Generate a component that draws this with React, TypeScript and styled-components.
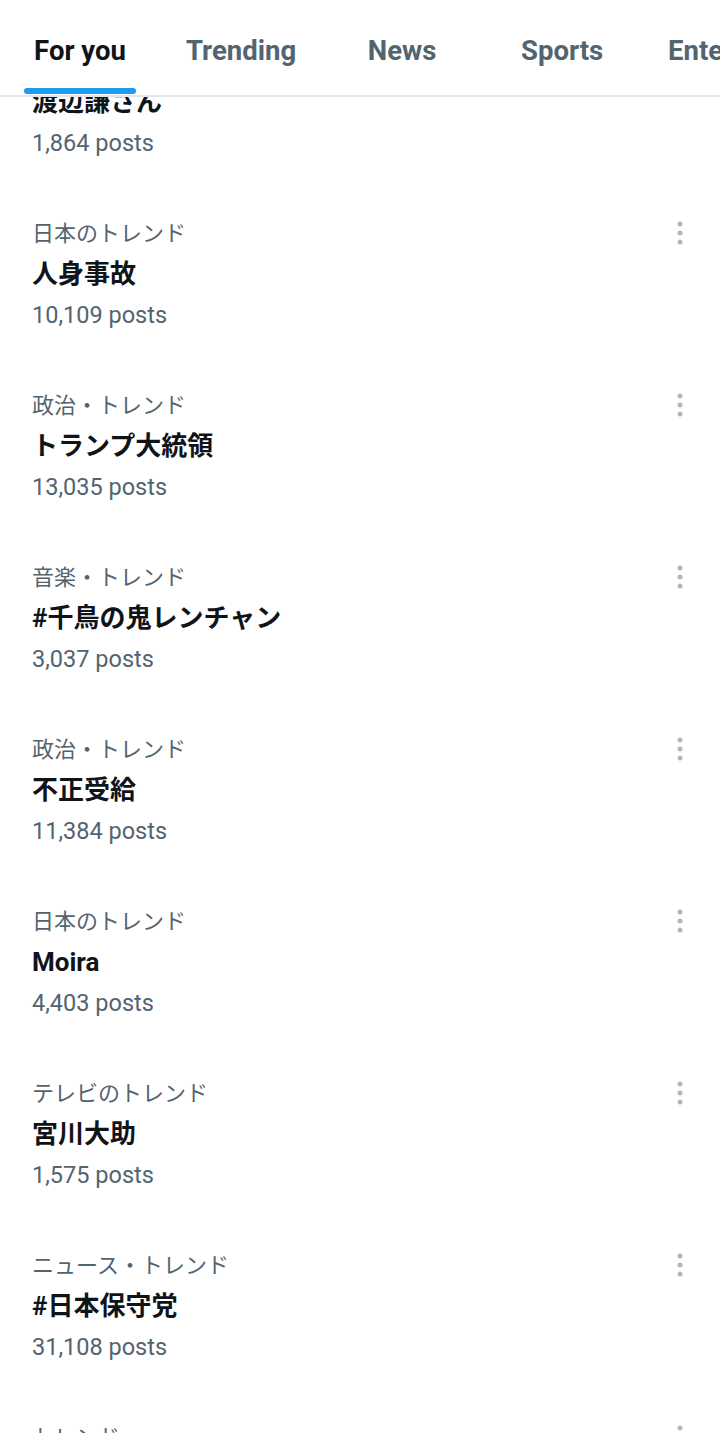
import React from "react";
import styled, { createGlobalStyle } from "styled-components";

const Global = createGlobalStyle`
  html, body { margin: 0; padding: 0; background: #fff; }
  body { font-family: Roboto, "Noto Sans CJK JP", sans-serif; -webkit-font-smoothing: antialiased; }
  * { box-sizing: border-box; }
`;

const Page = styled.div`
  width: 720px;
  height: 1433px;
  overflow: hidden;
  display: flex;
  flex-direction: column;
  background: #fff;
`;

const TabBar = styled.nav`
  flex: none;
  height: 97px;
  display: flex;
  border-bottom: 2px solid #e3e5e8;
  overflow: hidden;
  background: #fff;
  position: relative;
  z-index: 1;
`;

const Tab = styled.div<{ $active?: boolean }>`
  flex: none;
  min-width: 160px;
  padding: 35px 26px 0;
  display: flex;
  justify-content: center;
  position: relative;
  font-size: 27.5px;
  font-weight: 700;
  line-height: 32px;
  color: ${(p) => (p.$active ? "#0f1419" : "#536471")};
  white-space: nowrap;
`;

const Underline = styled.span`
  position: absolute;
  left: 24px;
  right: 24px;
  bottom: 1px;
  height: 6px;
  border-radius: 3px;
  background: #1d9bf0;
`;

const List = styled.div`
  flex: 1;
  overflow: hidden;
`;

const Items = styled.div`
  margin-top: -83px;
`;

const Item = styled.div`
  height: 172px;
  display: flex;
  padding: 24px 28px 0 32px;
`;

const Body = styled.div`
  flex: 1;
  display: flex;
  flex-direction: column;
`;

const Category = styled.div`
  font-size: 22px;
  line-height: 42px;
  color: #536471;
  font-family: "Noto Sans CJK JP", Roboto, sans-serif;
`;

const Title = styled.div`
  font-size: 26px;
  line-height: 44px;
  font-weight: 700;
  color: #0f1419;
  font-family: Roboto, "Noto Sans CJK JP", sans-serif;
`;

const Posts = styled.div`
  font-size: 23.5px;
  line-height: 38px;
  color: #536471;
`;

const More = styled.div`
  flex: none;
  width: 24px;
  height: 24px;
  margin-top: 11px;
  color: #b0b9c1;
`;

const DotsIcon = () => (
  <svg width="24" height="24" viewBox="0 0 24 24" fill="currentColor">
    <circle cx="12" cy="3" r="2.5" />
    <circle cx="12" cy="12" r="2.5" />
    <circle cx="12" cy="21" r="2.5" />
  </svg>
);

const tabs = ["For you", "Trending", "News", "Sports", "Entertainment"];

const trends = [
  { cat: "日本のトレンド", title: "渡辺謙さん", posts: "1,864 posts" },
  { cat: "日本のトレンド", title: "人身事故", posts: "10,109 posts" },
  { cat: "政治・トレンド", title: "トランプ大統領", posts: "13,035 posts" },
  { cat: "音楽・トレンド", title: "#千鳥の鬼レンチャン", posts: "3,037 posts" },
  { cat: "政治・トレンド", title: "不正受給", posts: "11,384 posts" },
  { cat: "日本のトレンド", title: "Moira", posts: "4,403 posts" },
  { cat: "テレビのトレンド", title: "宮川大助", posts: "1,575 posts" },
  { cat: "ニュース・トレンド", title: "#日本保守党", posts: "31,108 posts" },
  { cat: "トレンド", title: "", posts: "" },
];

export default function App() {
  return (
    <>
      <Global />
      <Page>
        <TabBar>
          {tabs.map((t, i) => (
            <Tab key={t} $active={i === 0}>
              {t}
              {i === 0 && <Underline />}
            </Tab>
          ))}
        </TabBar>
        <List>
          <Items>
            {trends.map((t, i) => (
              <Item key={i}>
                <Body>
                  <Category>{t.cat}</Category>
                  <Title>{t.title}</Title>
                  <Posts>{t.posts}</Posts>
                </Body>
                <More>
                  <DotsIcon />
                </More>
              </Item>
            ))}
          </Items>
        </List>
      </Page>
    </>
  );
}
